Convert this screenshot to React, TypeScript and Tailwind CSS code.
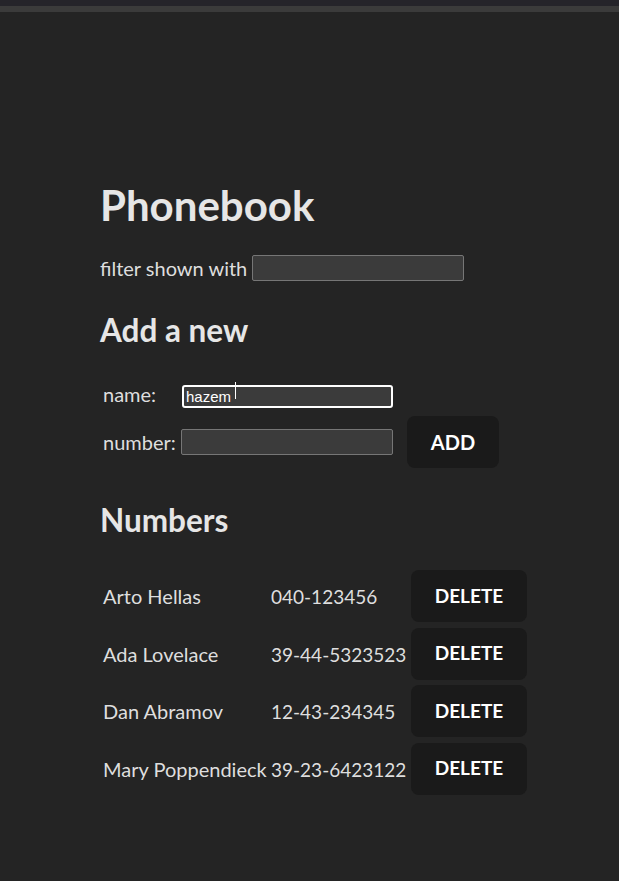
import React, { useState } from 'react';

interface Person {
  name: string;
  number: string;
}

const initialPersons: Person[] = [
  { name: 'Arto Hellas', number: '040-123456' },
  { name: 'Ada Lovelace', number: '39-44-5323523' },
  { name: 'Dan Abramov', number: '12-43-234345' },
  { name: 'Mary Poppendieck', number: '39-23-6423122' },
];

const font = { fontFamily: 'Lato, "Noto Sans", sans-serif' };

export default function App() {
  const [persons] = useState<Person[]>(initialPersons);
  const [filter, setFilter] = useState('');
  const [newName, setNewName] = useState('hazem');
  const [newNumber, setNewNumber] = useState('');

  const shown = persons.filter(p => p.name.toLowerCase().includes(filter.toLowerCase()));

  return (
    <div className="min-h-[881px] bg-[#242424] text-[#dedede]" style={font}>
      <div className="h-[6px] bg-[#25242a]" />
      <div className="h-[6px] bg-[#3b3b3b]" />

      <div className="pl-[100px] pt-[170px]">
        <h1 className="text-[42px] font-bold leading-[46px] text-[#e6e6e6]">Phonebook</h1>

        <div className="mt-[25px] flex items-center gap-[5px] text-[20px]">
          <span>filter shown with</span>
          <input
            value={filter}
            onChange={e => setFilter(e.target.value)}
            className="h-[26px] w-[212px] rounded-[2px] border border-[#767676] bg-[#3b3b3b] px-1 text-white outline-none"
          />
        </div>

        <h2 className="mt-[29px] text-[31.5px] font-bold leading-[36px] text-[#e6e6e6]">Add a new</h2>

        <form
          className="mt-[31px] grid grid-cols-[79px_212px_auto] items-center gap-y-[7px] pl-[3px] text-[20px]"
          onSubmit={e => e.preventDefault()}
        >
          <span>name:</span>
          <div className="relative">
            <input
              value={newName}
              onChange={e => setNewName(e.target.value)}
              className="h-[23px] w-[211px] rounded-[3px] border-2 border-white bg-[#3b3b3b] pl-[2px] text-[15px] text-white outline-none"
              style={{ fontFamily: '"Liberation Sans", Arial, sans-serif' }}
            />
            <span className="absolute left-[53px] top-[3px] h-[17px] w-px bg-white" />
          </div>
          <div />
          <span>number:</span>
          <input
            value={newNumber}
            onChange={e => setNewNumber(e.target.value)}
            className="-ml-px h-[26px] w-[212px] rounded-[2px] border border-[#767676] bg-[#3b3b3b] px-1 text-white outline-none"
          />
          <button
            type="submit"
            className="ml-[13px] h-[52px] w-[92px] rounded-[8px] bg-[#1a1a1a] text-[20px] font-bold text-white"
          >
            ADD
          </button>
        </form>

        <h2 className="mt-[34px] text-[31.5px] font-bold leading-[36px] text-[#e6e6e6]">Numbers</h2>

        <div className="mt-[32px] grid grid-cols-[168px_140px_116px] items-center gap-y-[5.5px] pl-[3px] text-[20px]">
          {shown.map(p => (
            <React.Fragment key={p.name}>
              <span className="whitespace-nowrap leading-[30px]">{p.name}</span>
              <span className="mt-[2px] whitespace-nowrap text-[19px] leading-[30px]">{p.number}</span>
              <button className="h-[52px] w-[116px] rounded-[8px] bg-[#1a1a1a] text-[19px] font-bold text-white">
                DELETE
              </button>
            </React.Fragment>
          ))}
        </div>
      </div>
    </div>
  );
}
